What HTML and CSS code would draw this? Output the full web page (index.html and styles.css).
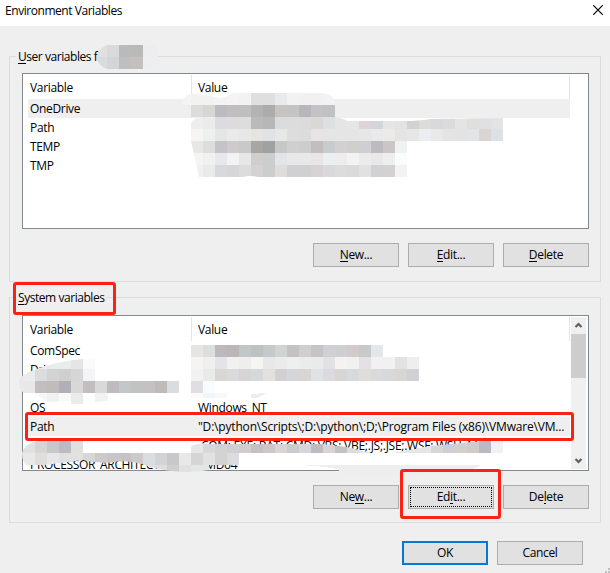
FILE: index.html
```
<!DOCTYPE html>
<html lang="en">
<head>
<meta charset="utf-8">
<title>Environment Variables</title>
<link rel="stylesheet" href="styles.css">
</head>
<body>
<main class="dialog">
  <header class="titlebar"><h1 class="title">Environment Variables</h1>
    <svg class="close" width="10" height="10" viewBox="0 0 10 10"><path d="M.3.3 9.7 9.7M9.7.3.3 9.7"/></svg>
  </header>
  <section class="group user">
    <h2 class="legend w-user"><u>U</u>ser variables f</h2>
    <div class="list">
      <div class="table">
        <div class="row head"><span>Variable</span><span>Value</span></div>
        <div class="row selected"><span>OneDrive</span><span></span></div>
        <div class="row"><span>Path</span><span></span></div>
        <div class="row"><span>TEMP</span><span></span></div>
        <div class="row"><span>TMP</span><span></span></div>
      </div>
    </div>
    <div class="actions"><button><span><u>N</u>ew...</span></button><button><span><u>E</u>dit...</span></button><button><span><u>D</u>elete</span></button></div>
  </section>
  <section class="group system">
    <h2 class="legend"><u>S</u>ystem variables</h2>
    <div class="list">
      <div class="table">
        <div class="row head"><span>Variable</span><span>Value</span></div>
        <div class="row"><span>ComSpec</span><span></span></div>
        <div class="row"><span>DriverData</span><span></span></div>
        <div class="row"><span></span><span></span></div>
        <div class="row"><span>OS</span><span>Windows_NT</span></div>
        <div class="row selected"><span>Path</span><span class="path">"D:\python\Scripts\;D:\python\;D;\Program Files (x86)\VMware\VM...</span></div>
        <div class="row"><span></span><span class="ext">.COM;.EXE;.BAT;.CMD;.VBS;.VBE;.JS;.JSE;.WSF;.WSH;.M</span></div>
        <div class="row"><span>PROCESSOR_ARCHITECTURE</span><span>AMD64</span></div>
      </div>
      <div class="scrollbar">
        <svg width="15" height="17" viewBox="0 0 15 17"><path d="m4.5 10 3-3 3 3"/></svg>
        <div class="thumb"></div>
        <svg class="down" width="15" height="17" viewBox="0 0 15 17"><path d="m4.5 7 3 3 3-3"/></svg>
      </div>
    </div>
    <div class="actions"><button><span>Ne<u>w</u>...</span></button><button class="focused"><span>Ed<u>i</u>t...</span></button><button><span>De<u>l</u>ete</span></button></div>
  </section>
  <footer class="footer"><button class="default"><span>OK</span></button><button><span>Cancel</span></button></footer>
  <svg class="redaction" width="610" height="573" viewBox="0 0 610 573">
    <defs>
      <clipPath id="clip-name"><path d="M107 45H155Q159 47 158 57T151 69H107Q97 65 97 57T107 45Z"/></clipPath>
      <clipPath id="clip-user"><path d="M182 105Q182 96 190 94Q204 94 219 98Q226 98 232 93H323Q334 94 336 105V117Q345 119 347 121L372 121 403 121Q420 121 430 119L503 118V141H407V177H258Q250 175 243 177H199L196 163 191 141V129Q189 122 196 118H191V105Z"/></clipPath>
      <clipPath id="clip-left"><path d="M19 382Q20 374 34 370Q57 361 83 359H95V381H179V393H108V401L95 402V393H83V404H71V401L47 402 35 393H24Q19 390 19 382Z"/></clipPath>
      <clipPath id="clip-low"><path d="M22 453Q25 443 38 441H83V453H191V446Q201 442 209 444H323L347 447 372 453H431V446L482 441Q493 433 503 441V453H239V465H209V470Q180 475 150 467Q135 461 120 461Q105 465 83 460L60 463 30 467Q22 465 22 453Z"/></clipPath>
    </defs>
    <g class="mosaic" clip-path="url(#clip-name)" data-grid="name"></g>
    <g class="mosaic" clip-path="url(#clip-user)" data-grid="user"></g>
    <g class="mosaic" data-grid="system"></g>
    <g class="mosaic" clip-path="url(#clip-left)" data-grid="left"></g>
    <g class="mosaic" clip-path="url(#clip-low)" data-grid="low"></g>
    <path fill="#eee" d="M300 465H482Q475 470 459 471H437Q410 478 370 477Q342 474 337 469Q322 466 300 465Z"/>
    <path fill="#e6e6e6" d="M392 453 431 446V453Z"/>
    <path fill="#ededed" d="M251 394 267 393 257 398H251Z"/>
  </svg>
  <div class="mark mark-system"></div><div class="mark mark-path"></div><div class="mark mark-edit"></div>
  <svg class="grip" width="5" height="5" viewBox="0 0 5 5"><path d="M3 0h2v2H3zM0 3h2v2H0zM3 3h2v2H3z"/></svg>
</main>
<script src="mosaic.js"></script>
</body>
</html>
```
FILE: styles.css
```
*{box-sizing:border-box}
body{margin:0;font:12px/19px "Open Sans","Noto Sans",sans-serif;color:#000;letter-spacing:-.33px}
.dialog{position:relative;width:610px;height:573px;background:#efefef;overflow:hidden;display:flex;flex-direction:column}
.titlebar{height:26px;background:#fff;display:flex;justify-content:space-between;padding:1px 7px 0 5px}
h1,h2{font-size:12px;font-weight:400;margin:0;letter-spacing:-.45px}
.close{margin-top:4px;stroke:#000;stroke-width:1.2}
u{text-decoration:none;border-bottom:1px solid #000;display:inline-block;line-height:13px}
.group{width:592px;height:226px;margin-left:9px;border:1px solid #dcdcdc;padding:0 12px;flex:none}
.user{margin-top:30px}
.system{margin-top:15px}
.legend{height:19px;margin:-10px 0 0 -6px;padding:0 2px;background:#efefef;width:max-content;white-space:nowrap}
.w-user{width:142px}
.list{width:567px;height:156px;margin-top:7px;border:1px solid #828790;background:#fff;display:flex;overflow:hidden;padding:1px 2px 1px 5px;justify-content:space-between}
.system .list{margin-top:8px}
.table{width:542px;overflow:hidden;flex:none}
.row{display:grid;grid-template-columns:168px 1fr;height:19px;white-space:nowrap}
.row span{padding-left:2px;overflow:hidden}
.row.head{height:24px;line-height:25px;border-right:1px solid #e5e5e5}
.head span:first-child{border-right:1px solid #e5e5e5;width:164px}
.selected{background:#efefef}
.row .path{letter-spacing:-.18px}
.row .ext{letter-spacing:-.27px}
.scrollbar{width:15px;background:#f0f0f0;display:flex;flex-direction:column}
.scrollbar svg{fill:none;stroke:#606060;stroke-width:2.2;flex:none}
.thumb{height:44px;background:#cdcdcd}
.down{margin-top:auto}
.actions{display:flex;gap:9px;margin:14px 0 0 291px}
button{width:86px;height:24px;padding:0;flex:none;border:1px solid #adadad;background:#e1e1e1;color:#000;font:inherit;letter-spacing:inherit;line-height:18px}
.focused{position:relative}
.focused:after{content:"";position:absolute;inset:1px;border:1px dotted #000}
.footer{display:flex;gap:9px;margin:18px 0 0 402px}
.default{border:2px solid #0078d7}
.redaction{position:absolute;left:0;top:0;shape-rendering:crispEdges}
.mark{position:absolute;border:3px solid #fc2213;border-radius:3px}
.mark-system{left:13px;top:282px;width:103px;height:33px}
.mark-path{left:25px;top:412px;width:549px;height:29px}
.mark-edit{left:400px;top:469px;width:101px;height:50px}
.grip{position:absolute;right:0;bottom:0;fill:#bfbfbf}
```
FILE: mosaic.js
```
// Censored areas: each row is [x, y, height, colours of 12px cells].
const grids = {
  name: [
    [95,45,12,"e0e0e1 dadadc b9babb b9b9b9 ededee ededed"],
    [95,57,12,"d9dbdf d4d5d7 bfbfbf c3c0bf edeef0 eeeeee"]
  ],
  user: [
    [179,93,12,"f3f3f3 f2f2f1 f2f2f2 f3f3f3 f4f4f4 f2f2f2 e0dfde dfdfdf e8eaee f2f2f2 f1f1f1 f1f1f1 f2f2f2"],
    [191,105,12,"dcdcdc d6d6d3 bcbcc0 c0bfbe bfbfbf b3b3b3 acacac c6c4c2 c4c4c4 b8b6bc c4c2c4 bfc1c3"],
    [191,117,12,"eeeeee ebebeb dcdbe0 dddcdc dddddd bbbab9 b6b8b7 dadbdd dcdcdc dbdbdb d9d8d6 dce0e2 e6e5e5 e6e6e4 dbd5d7 d4d5d9 e5e5e3 e2e3e3 d2d2d2 dcddda d9d9dc dcdadc e3e5e5 e0dfde e0dfe1 e2e3e5"],
    [191,129,12,"f6f5f3 eef0ef e3e6e5 eaeaea e7e7e7 e4e4e1 e0e2e6 e7e7e5 dddddd dcdcdc e6e4e5 e5e5e5 e5e5e5 e5e5e5 e6e6e6 e9e9eb ebeae8 e4e4e4 e6e6e6 ecedf0 e9e9e9 e5e3e4 e3e3e3 e2e4e6 d9d5d4 dde1e5"],
    [191,141,12,"e7e7e5 dddedb c3c3c8 cfcac9 c9c8cb a7a6a4 9fa2a0 c5c8c7 cfcfcf cdcdcf c4bdbe c8ccce d3d0d0 d0cfce cfcfd3 bdbbbf cac6c7 f0f1f3"],
    [191,153,12,"f4f4f2 eff1f0 e8e8ec f3f3f3 e7e7e7 cfcecd cccecd e2e4e7 e8e8e8 e8e8e8 e7e5e6 eceef0 ededed f3f3f3 ebebeb e8e8e8 eeeeee fbfcfc"],
    [191,165,12,"f0f0f0 e9ebea d8d9db d8d5d6 dcdcdc d2d2d2 cccecd dedddb d0cfd1 d0d0d0 d7d3d5 d9d9d9 dcdcdc dadada e0e1e3 d1d0d3 d3d1d2 f3f3f3"]
  ],
  system: [
    [191,345,12,"e6e5e3 dcdedd bdb8bc bbb6b8 c1c7c7 bdc2c1 c6c8cb d0d3d2 c5c2c2 cfced0 c5c3c4 d0cfd3 cfced3 d2cacb c9c9c9 e3e7ea"],
    [191,357,12,"f5f4f2 efefed e4e4e8 f1f1f1 eeeeee f5f5f3 e8e8e8 ecebeb eef0ef ebebeb e9ebea e3e1e3 f3f3f3 f1f1f1 e3e1e3 f1f1f1 f1f1f1 e2e2e2 eeeeee"],
    [191,369,12,"f2f2f2 e9ebea d8d7d6 dad9dc d6d4d5 d7d8da e2e1df d2d0d2 d5d6da d8d5d5 e1e2e5 dcdadc d8d6d5 d8d9db dfddda dadadd d7d8da d8d6d4 d0d0d5"],
    [191,381,12,"e0dee0 f8fcff"],
    [191,393,5,"fafafa f2f5f8 f8f8f8"]
  ],
  left: [
    [11,357,12,"eaebeb eaebeb eaebeb eaebeb eaebeb e5e5e6 fafafa"],
    [11,369,12,"e6e7e7 eaebeb dbdcde d3d3d3 cfcfd0 d6d6d6 f4f4f7"],
    [11,381,12,"e8e9e9 e9e8e7 c2bebf c1bcba b1aeb6 d8d8d8 c3bdc0 d9d9d9 c1bbbf c4c6c9 c1c3c2 c3c1c1 bfbbbb dadddf"],
    [23,393,12,"eeeeee f7f7f7 f1f1f1 f9f9f9 ebebeb fafafa f2f2f2 f5f5f5"]
  ],
  low: [
    [11,441,12,"e4e4e4 e2e1e0 d6d4d4 c9c8c9 bcbbc1 e0e0de"],
    [191,441,12,"e8e7e7 d9d8d8 d4d3d3 d0d0d4 d1cdcc c5c1c3 cac8c8 d8d5d5 cbcacc d5d6d8 bfbbbf d7d5d4 c5c2c4 dddcdc e6e6e6"],
    [431,441,12,"d8d6d6 cfced2 d3cfcc d1cccc bcbac0 f0f1f3"],
    [11,453,12,"e9e9e9 e9e9e9 dfdedd e8e6e9 e1e1e1 e1e1e1 d9d7d5 cdcacc c7c7ca c5c3c5 ccc9c9 d9dee0 d3d3d3 c9c7cb e8e8e8 d5d5d5 e2e2e2 d5d3d2 dcdcdf"],
    [143,465,12,"e2e1e1 dfdede d1ced2 e1e1e1 e4e5e5 e5e5e5"]
  ]
};
document.querySelectorAll(".mosaic").forEach(group => {
  for (const [x, y, height, colours] of grids[group.dataset.grid]) {
    colours.split(" ").forEach((colour, i) => {
      const cell = document.createElementNS("http://www.w3.org/2000/svg", "rect");
      const attrs = {x: x + i * 12, y, width: 12, height, fill: "#" + colour};
      for (const key in attrs) cell.setAttribute(key, attrs[key]);
      group.append(cell);
    });
  }
});
```
